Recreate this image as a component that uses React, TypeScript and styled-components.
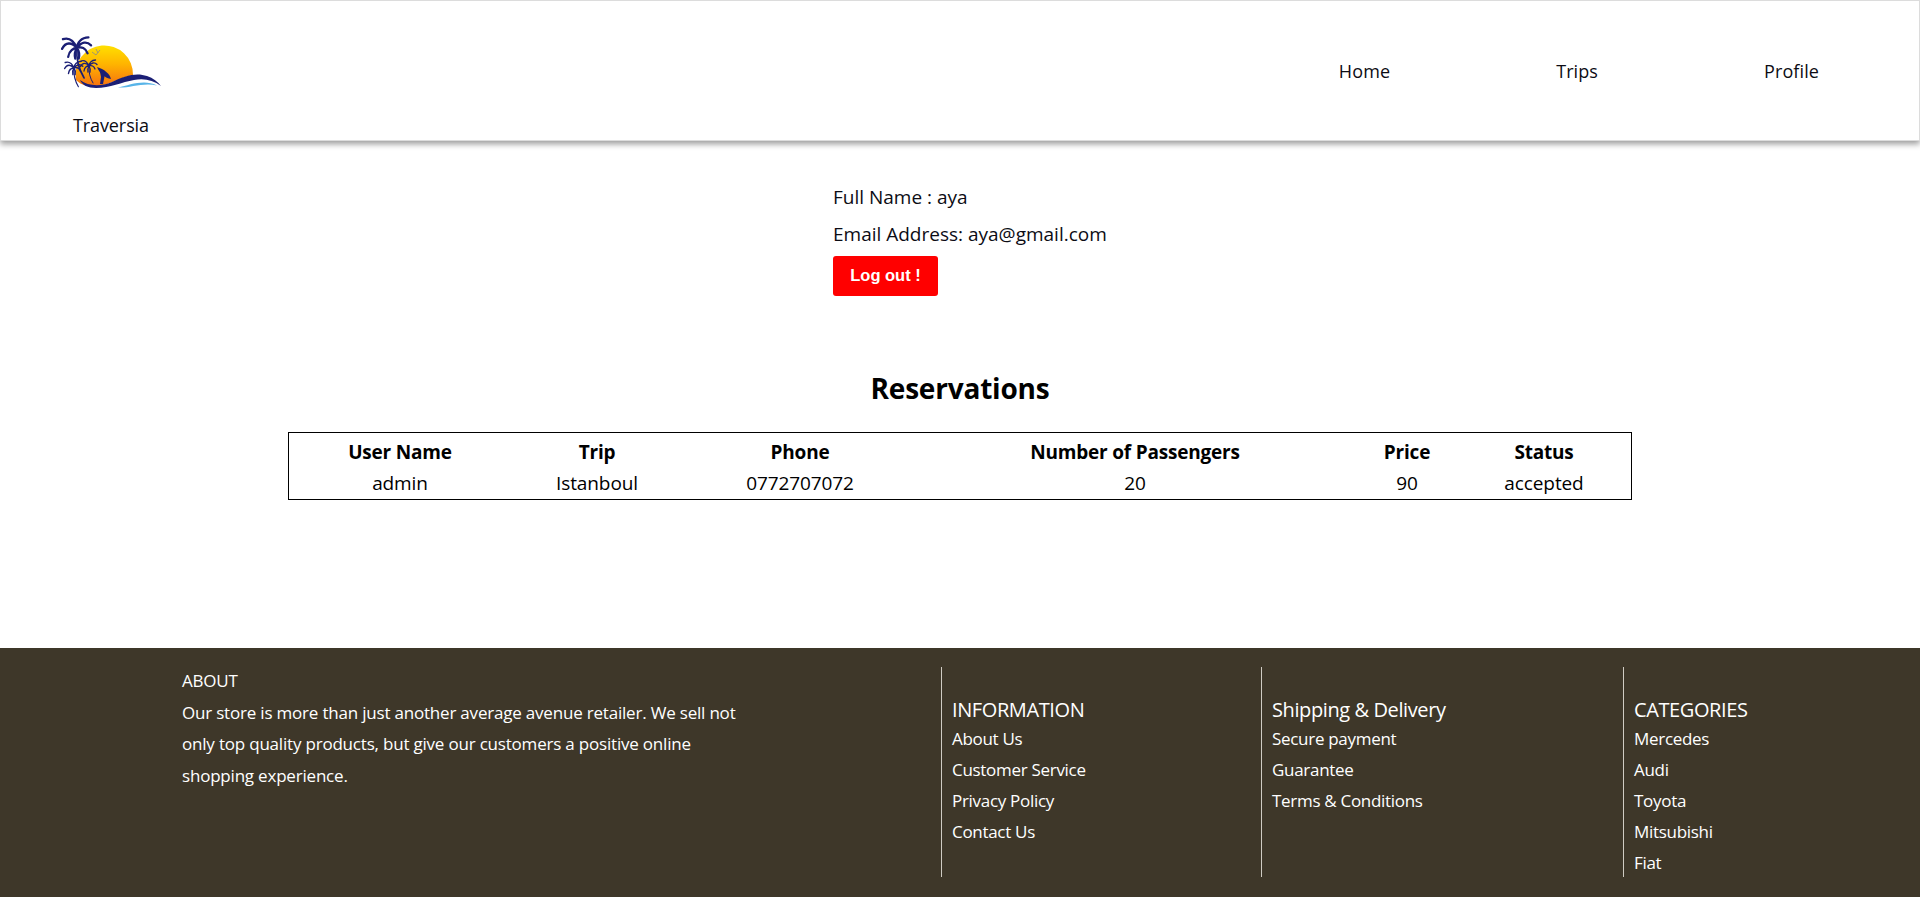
import styled, { createGlobalStyle } from "styled-components";

const GlobalStyle = createGlobalStyle`
  html, body {
    margin: 0;
    padding: 0;
    background: #fff;
    font-family: "Open Sans", "Noto Sans", sans-serif;
    color: #0c0c14;
  }
`;

const Header = styled.header`
  height: 141px;
  box-sizing: border-box;
  border: 1px solid #dcdcdc;
  box-shadow: 0 3px 6px rgba(0, 0, 0, 0.4);
  display: flex;
  justify-content: space-between;
`;

const Brand = styled.div`
  display: flex;
  flex-direction: column;
  padding: 33px 0 0 59px;
`;

const BrandName = styled.span`
  margin: 21px 0 0 13px;
  font-size: 18px;
  letter-spacing: -0.1px;
  line-height: 24px;
`;

const Nav = styled.nav`
  display: flex;
  gap: 166px;
  padding: 58px 100px 0 0;
`;

const NavLink = styled.a`
  font-size: 18px;
  letter-spacing: 0.1px;
  line-height: 24px;
  height: 24px;
`;

const Account = styled.section`
  padding: 43px 0 0 833px;
`;

const AccountLine = styled.p`
  margin: 0 0 11px;
  font-size: 19px;
  line-height: 26px;
`;

const LogoutButton = styled.button`
  display: block;
  width: 105px;
  height: 40px;
  margin-top: -2px;
  padding: 0 6px 1px;
  border: 0;
  border-radius: 3px;
  background: #ff0000;
  color: #fff;
  font-family: "Liberation Sans", Arial, sans-serif;
  font-size: 16.5px;
  font-weight: 700;
`;

const Title = styled.h2`
  margin: 72px 0 24px;
  text-align: center;
  font-size: 28px;
  font-weight: 700;
  letter-spacing: -0.2px;
  line-height: 40px;
  color: #000;
`;

const Table = styled.table`
  width: 1344px;
  margin: 0 auto 0 288px;
  box-sizing: border-box;
  border: 1px solid #000;
  border-spacing: 0;
  table-layout: fixed;
  padding: 4px 0 0;
  color: #000;
`;

const HeadCell = styled.th<{ $width: number }>`
  width: ${(p) => p.$width}px;
  padding: 4px 0 5px;
  font-size: 19px;
  font-weight: 700;
  letter-spacing: -0.2px;
  line-height: 22px;

  &:last-child {
    padding-right: 4px;
  }
`;

const Cell = styled.td`
  padding: 4px 0 5px;
  text-align: center;
  font-size: 19px;
  letter-spacing: -0.1px;
  line-height: 22px;

  &:last-child {
    padding-right: 4px;
  }
`;

const Footer = styled.footer`
  margin-top: 148px;
  height: 249px;
  box-sizing: border-box;
  background: #3e3729;
  color: #fff;
  padding: 17px 0 0 182px;
  display: grid;
  grid-template-columns: 759px 320px 362px 1fr;
  font-size: 17px;
  letter-spacing: -0.3px;
`;

const About = styled.div`
  line-height: 31.5px;
  width: 580px;
  letter-spacing: -0.2px;
`;

const Column = styled.div`
  height: 210px;
  margin-top: 2px;
  box-sizing: border-box;
  border-left: 1px solid #cfcbc3;
  padding: 29px 0 0 10px;
`;

const ColumnTitle = styled.div`
  font-size: 20px;
  letter-spacing: -0.4px;
  line-height: 27px;
`;

const ColumnLink = styled.a`
  display: block;
  line-height: 31px;
`;

const columns = [
  { title: "INFORMATION", links: ["About Us", "Customer Service", "Privacy Policy", "Contact Us"] },
  { title: "Shipping & Delivery", links: ["Secure payment", "Guarantee", "Terms & Conditions"] },
  { title: "CATEGORIES", links: ["Mercedes", "Audi", "Toyota", "Mitsubishi", "Fiat"] },
];

const headings: [string, number][] = [
  ["User Name", 222],
  ["Trip", 172],
  ["Phone", 234],
  ["Number of Passengers", 436],
  ["Price", 108],
  ["Status", 166],
];

const cells = ["admin", "Istanboul", "0772707072", "20", "90", "accepted"];

const Palm = ({ x, y, s }: { x: number; y: number; s: number }) => (
  <g transform={`translate(${x} ${y}) scale(${s})`} fill="none" stroke="#1b1f75" strokeLinecap="round">
    <path d="M0 0C-6-7-13-7-17 1M0 0C-4-9-10-12-16-10M0 0C0-6 5-12 13-12M0 0C5-7 11-8 16-3M0 0C5-2 10 0 12 6M0 0C-4 0-9 3-10 10M0 0C-2 3-3 8-2 12M0 0C2 3 3 8 2 12" strokeWidth="2.6" />
    <path d="M0 0C-1 12 2 24 8 34" strokeWidth="2" />
  </g>
);

const Logo = () => (
  <svg width="104" height="58" viewBox="60 34 104 58">
    <defs>
      <linearGradient id="sun" x1="0" y1="0" x2="0" y2="1">
        <stop offset="0" stopColor="#ffe000" />
        <stop offset="0.45" stopColor="#ffb400" />
        <stop offset="1" stopColor="#f56f10" />
      </linearGradient>
    </defs>
    <path d="M76 80A28.8 28.8 0 1 1 133 75C122 77 110 84 97 87C90 87 82 86 76 80Z" fill="url(#sun)" />
    <Palm x={77} y={48} s={0.88} />
    <Palm x={74} y={68} s={0.55} />
    <Palm x={89} y={66} s={0.5} />
    <path d="M97 67C104 69 110 74 111 79C105 78 100 74 97 67Z" fill="#1b1f75" />
    <path d="M100 72L104 71L105 74L103 84L100 84L101 77Z" fill="#1b1f75" />
    <path d="M92 52L96 55L100 50M96 49L98 53" fill="none" stroke="#8a8a8a" strokeWidth="0.8" />
    <path d="M80 80C88 86 100 87 112 82C124 76 136 72 147 76C153 78 158 82 161 86C153 80 144 78 134 80C122 82 110 88 96 88C88 88 82 85 80 80Z" fill="#1b1f75" />
    <path d="M118 87.5C130 85 144 79 157 85.5C144 82 130 88 118 87.5Z" fill="#58b4e8" />
  </svg>
);

const App = () => {
  return (
    <>
      <GlobalStyle />
      <Header>
        <Brand>
          <Logo />
          <BrandName>Traversia</BrandName>
        </Brand>
        <Nav>
          <NavLink>Home</NavLink>
          <NavLink>Trips</NavLink>
          <NavLink>Profile</NavLink>
        </Nav>
      </Header>
      <Account>
        <AccountLine>Full Name : aya</AccountLine>
        <AccountLine>Email Address: aya@gmail.com</AccountLine>
        <LogoutButton>Log out !</LogoutButton>
      </Account>
      <Title>Reservations</Title>
      <Table>
        <thead>
          <tr>
            {headings.map(([label, width]) => (
              <HeadCell key={label} $width={width}>
                {label}
              </HeadCell>
            ))}
          </tr>
        </thead>
        <tbody>
          <tr>
            {cells.map((value) => (
              <Cell key={value}>{value}</Cell>
            ))}
          </tr>
        </tbody>
      </Table>
      <Footer>
        <About>
          ABOUT
          <br />
          Our store is more than just another average avenue retailer. We sell not only top quality products, but give our customers a positive online shopping experience.
        </About>
        {columns.map((column) => (
          <Column key={column.title}>
            <ColumnTitle>{column.title}</ColumnTitle>
            {column.links.map((link) => (
              <ColumnLink key={link}>{link}</ColumnLink>
            ))}
          </Column>
        ))}
      </Footer>
    </>
  );
};

export default App;
